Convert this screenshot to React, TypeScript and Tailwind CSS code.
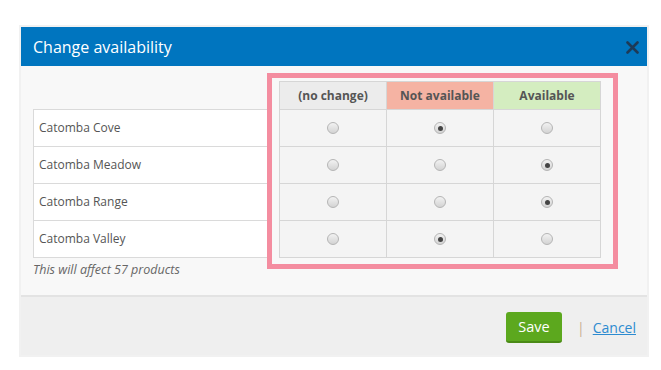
import React from "react";

const rows: { name: string; sel: number }[] = [
  { name: "Catomba Cove", sel: 1 },
  { name: "Catomba Meadow", sel: 2 },
  { name: "Catomba Range", sel: 2 },
  { name: "Catomba Valley", sel: 1 },
];

function Radio({ checked }: { checked: boolean }) {
  return (
    <span className="w-[12px] h-[12px] rounded-full border border-[#b5b5b5] bg-gradient-to-b from-[#f2f2f2] to-[#d3d3d3] flex items-center justify-center">
      {checked && <span className="w-[5px] h-[5px] rounded-full bg-[#444]" />}
    </span>
  );
}

export default function App() {
  return (
    <div className="w-[661px] h-[370px] bg-white pt-[25px] pl-[19px] font-['Open_Sans',sans-serif]">
      <div className="w-[630px] border-2 border-[#f1f1f1]">
        {/* Header */}
        <div className="h-[39px] bg-[#0075bf] flex items-center justify-between pl-[12px] pr-[8px]">
          <span className="text-white text-[16px] leading-none">Change availability</span>
          <svg width="13" height="13" viewBox="0 0 13 13" className="mt-[1px]">
            <path d="M1.5 1.5 L11.5 11.5 M11.5 1.5 L1.5 11.5" stroke="#1d3a57" strokeWidth="2.6" strokeLinecap="round" />
          </svg>
        </div>
        {/* Body */}
        <div className="h-[229px] bg-[#f8f8f8] pt-[7px] pl-[12px] flex items-start">
          <div className="w-[234px]">
            <div className="h-[36px]" />
            <div className="border-l border-b border-[#dadada] bg-white">
              {rows.map((r) => (
                <div key={r.name} className="h-[37px] border-t border-[#dadada] flex items-center pl-[5px] text-[12px] text-[#555]">
                  {r.name}
                </div>
              ))}
            </div>
            <div className="mt-[4px] text-[12.5px] leading-[16px] italic text-[#666]">This will affect 57 products</div>
          </div>
          <div className="border-[5px] border-[#f48da0] pt-[3px] pl-[7px] pr-[12px] pb-[6px]">
            <div className="w-[322px] border-t border-l border-[#d6d6d6] grid grid-cols-3">
              <div className="h-[28px] border-r border-b border-[#d6d6d6] bg-[#ececec] flex items-center justify-center text-[12px] font-bold text-[#555]">(no change)</div>
              <div className="h-[28px] border-r border-b border-[#d6d6d6] bg-[#f5b3a3] flex items-center justify-center text-[12px] font-bold text-[#555]">Not available</div>
              <div className="h-[28px] border-r border-b border-[#d6d6d6] bg-[#d4edc0] flex items-center justify-center text-[12px] font-bold text-[#555]">Available</div>
              {rows.map((r) =>
                [0, 1, 2].map((c) => (
                  <div key={r.name + c} className="h-[37px] border-r border-b border-[#d6d6d6] bg-[#f4f4f4] flex items-center justify-center">
                    <Radio checked={r.sel === c} />
                  </div>
                ))
              )}
            </div>
          </div>
        </div>
        {/* Footer */}
        <div className="h-[60px] border-t-2 border-[#e3e3e3] bg-[#efefef] flex items-center justify-end pr-[11px]">
          <button className="mt-[3px] w-[56px] h-[31px] rounded-[3px] bg-[#5ca81e] border-b-2 border-[#4a8a16] text-white text-[14.5px] flex items-center justify-center">
            Save
          </button>
          <span className="ml-[15px] mt-[3px] text-[14px] text-[#c8b093]">|</span>
          <a href="#" className="ml-[8px] mt-[3px] text-[14px] text-[#2d8bd0] underline">Cancel</a>
        </div>
      </div>
    </div>
  );
}
